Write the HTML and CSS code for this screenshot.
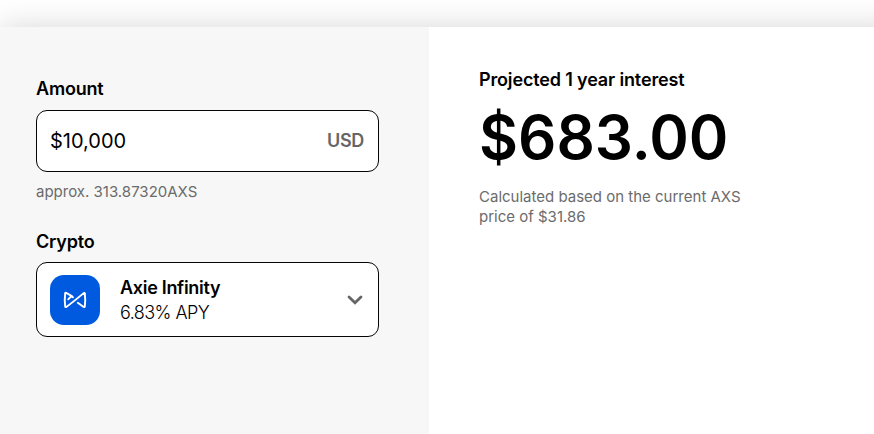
FILE: index.html
```html
<!DOCTYPE html>
<html lang="en">
<head>
  <meta charset="UTF-8">
  <meta name="viewport" content="width=device-width, initial-scale=1.0">
  <title>Interest Calculator</title>
  <link rel="stylesheet" href="styles.css">
</head>
<body>
  <main class="calculator">
    <!-- Inputs -->
    <section class="inputs">
      <label class="label" for="amount">Amount</label>
      <div class="field amount-field">
        <input id="amount" class="amount" type="text" value="$10,000">
        <span class="currency">USD</span>
      </div>
      <p class="approx">approx. 313.87320AXS</p>

      <div class="label crypto-label">Crypto</div>
      <button class="field crypto-field" type="button">
        <svg class="coin" viewBox="0 0 50 50" width="50" height="50">
          <rect width="50" height="50" rx="14" fill="#005ae0"/>
          <g fill="none" stroke="#fff" stroke-width="1.9" stroke-linejoin="round" stroke-linecap="round">
            <path d="M21.500 20.800L16.200 17.800Q15.200 17.500 15.200 18.500Q14.300 25 15.200 31.500Q15.300 32.500 16.300 31.900Q25 25.500 33.700 18.100Q34.700 17.500 34.800 18.500Q35.700 25 34.800 31.500Q34.700 32.500 33.700 31.900L27.800 27.700"/>
            <path d="M18.200 24.300l3.300-3.300 1.500 1.200"/>
          </g>
        </svg>
        <span class="crypto-text">
          <span class="crypto-name">Axie Infinity</span>
          <span class="crypto-apy">6.83% APY</span>
        </span>
        <svg class="chevron" viewBox="0 0 16 10" width="16" height="10">
          <path d="M2 2l6 5.800L14 2" fill="none" stroke="#666" stroke-width="2.800" stroke-linecap="round"/>
        </svg>
      </button>
    </section>

    <!-- Result -->
    <section class="result">
      <h2 class="result-title">Projected 1 year interest</h2>
      <div class="total">$683.00</div>
      <p class="note">Calculated based on the current AXS price of $31.86</p>
    </section>
  </main>
</body>
</html>
```

FILE: styles.css
```css
* {
  box-sizing: border-box;
}
body {
  margin: 0;
  padding-top: 27px;
  font-family: Inter, sans-serif;
  color: #000;
  background-color: white;
  overflow: hidden;
}
.calculator {
  display: flex;
  height: 407px;
  margin-right: -30px;
  background-color: white;
  box-shadow: 0 0 30px rgba(0, 0, 0, 0.16);
}
.inputs {
  width: 429px;
  padding: 50px 50px 0 36px;
  background-color: #f7f7f7;
}
.label {
  display: block;
  font-size: 18px;
  line-height: 24px;
  font-weight: 600;
  letter-spacing: -0.2px;
}
.field {
  display: flex;
  align-items: center;
  width: 100%;
  border: 1px solid #050505;
  border-radius: 11px;
  background-color: white;
}
.amount-field {
  height: 62px;
  margin-top: 9px;
  padding: 0 14px 0 13px;
}
.amount {
  flex: 1;
  min-width: 0;
  padding: 0;
  border: none;
  outline: none;
  font: 400 20px Inter, sans-serif;
  color: #000;
}
.currency {
  margin-top: -2px;
  font-size: 18px;
  font-weight: 600;
  letter-spacing: -0.3px;
  color: #666;
}
.approx {
  margin: 10px 0 0;
  font-size: 15px;
  line-height: 20px;
  color: #6b6b6b;
}
.crypto-label {
  margin-top: 28px;
}
.crypto-field {
  height: 75px;
  margin-top: 8px;
  padding: 0 15px 0 13px;
  font-family: inherit;
  color: inherit;
  text-align: left;
}
.crypto-text {
  flex: 1;
  margin-left: 20px;
  font-size: 18px;
  line-height: 25px;
}
.crypto-name,
.crypto-apy {
  display: block;
}
.crypto-name {
  font-weight: 600;
  letter-spacing: -0.3px;
}
.crypto-apy {
  font-weight: 350;
  letter-spacing: -0.55px;
}
.result {
  flex: 1;
  padding: 41px 50px 0;
}
.result-title {
  margin: 0;
  font-size: 18px;
  line-height: 24px;
  font-weight: 600;
  letter-spacing: -0.15px;
}
.total {
  margin-top: 9px;
  font-size: 60px;
  line-height: 72px;
  font-weight: 600;
}
.note {
  width: 280px;
  margin: 14px 0 0;
  font-size: 15px;
  line-height: 20px;
  color: #6b6b6b;
}
```
